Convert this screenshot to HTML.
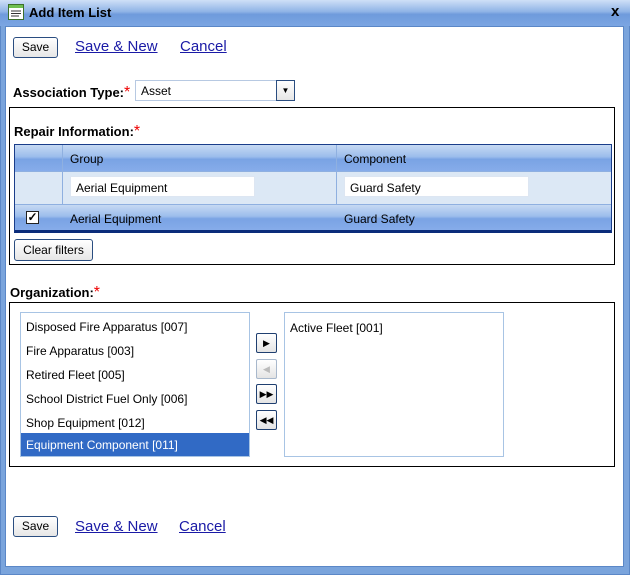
<!DOCTYPE html>
<html><head><style>
*{margin:0;padding:0;box-sizing:border-box}
body{width:630px;height:575px;overflow:hidden;font-family:"Liberation Sans",sans-serif;font-size:12px;color:#000;background:#fff;position:relative}
.a{position:absolute}
.frame{left:0;top:0;width:630px;height:575px;background:#7aa4dc;border:1px solid #5b87c7}
.title{left:0;top:0;width:630px;height:26px;background:linear-gradient(#cfe0f7,#8fb3e6 45%,#6f9bdc 55%,#7ba5e2)}
.content{left:5px;top:26px;width:619px;height:541px;background:#fff;border:1px solid #5b87c7}
.btn{border:1px solid #2a4d80;border-radius:3px;background:linear-gradient(#fff,#e6e6e6);font-size:12px;text-align:center;line-height:18px}
.lnk{color:#1a1aa6;text-decoration:underline;font-size:15px}
.lbl{font-weight:bold;font-size:13px}
.star{color:#e00;font-size:16px;font-weight:normal}
.box{border:1px solid #000}
.hdr{background:linear-gradient(#c6d9f3,#9cbdec 45%,#7aa3e4 55%,#86acea)}
.inp{background:#fff;border:1px solid #dde6f2;font-size:12px;padding:4px 5px}
.li{left:0;width:100%;height:24px;line-height:24px;padding-left:5px;font-size:12px}
.ab{width:21px;height:20px;border:1px solid #1f3f70;border-radius:2px;background:linear-gradient(#fff,#e4e4e4);font-size:9px;text-align:center;line-height:18px}
</style></head><body>
<div class="a frame"></div>
<div class="a title"></div>
<svg class="a" style="left:8px;top:4px" width="16" height="16"><rect x="0.5" y="0.5" width="15" height="15" fill="#fff" stroke="#3c6f2c"/><rect x="1" y="1" width="14" height="3" fill="#6fbf50"/><path d="M3 7h10M3 9.5h10M3 12h8" stroke="#333"/></svg>
<div class="a" style="left:29px;top:5px;font-weight:bold;font-size:13px">Add Item List</div>
<div class="a" style="left:611px;top:3px;font-weight:bold;font-size:15px">x</div>
<div class="a content"></div>

<div class="a btn" style="left:13px;top:37px;width:45px;height:21px">Save</div>
<div class="a lnk" style="left:75px;top:38px">Save &amp; New</div>
<div class="a lnk" style="left:180px;top:38px">Cancel</div>

<div class="a lbl" style="left:13px;top:84px">Association Type:<span class="star">*</span></div>
<div class="a" style="left:135px;top:80px;width:160px;height:21px;border:1px solid #b7c9e2;padding:3px 5px">Asset</div>
<div class="a" style="left:276px;top:80px;width:19px;height:21px;border:1px solid #2a4d80;background:linear-gradient(#fff,#e6e6e6);font-size:8px;text-align:center;line-height:19px">▼</div>

<div class="a box" style="left:9px;top:107px;width:606px;height:158px"></div>
<div class="a lbl" style="left:14px;top:123px">Repair Information:<span class="star">*</span></div>
<div class="a" style="left:14px;top:144px;width:598px;height:89px;border:1px solid #1a3d8a;border-bottom:3px solid #0b2c7a;background:#dce8f5"></div>
<div class="a hdr" style="left:15px;top:145px;width:596px;height:26px"></div>
<div class="a" style="left:62px;top:145px;width:1px;height:59px;background:#8fb0e0"></div>
<div class="a" style="left:336px;top:145px;width:1px;height:59px;background:#8fb0e0"></div>
<div class="a" style="left:70px;top:152px">Group</div>
<div class="a" style="left:344px;top:152px">Component</div>
<div class="a" style="left:15px;top:171px;width:596px;height:1px;background:#8fb0e0"></div>
<div class="a inp" style="left:70px;top:176px;width:185px;height:21px">Aerial Equipment</div>
<div class="a inp" style="left:344px;top:176px;width:185px;height:21px">Guard Safety</div>
<div class="a hdr" style="left:15px;top:204px;width:596px;height:26px;border-top:1px solid #8fb0e0"></div>
<div class="a" style="left:26px;top:211px;width:13px;height:13px;border:1px solid #222;background:#fff;font-size:12px;line-height:11px;text-align:center;font-weight:bold">✓</div>
<div class="a" style="left:70px;top:212px">Aerial Equipment</div>
<div class="a" style="left:344px;top:212px">Guard Safety</div>
<div class="a btn" style="left:14px;top:239px;width:79px;height:22px;line-height:20px">Clear filters</div>

<div class="a lbl" style="left:10px;top:284px">Organization:<span class="star">*</span></div>
<div class="a box" style="left:9px;top:302px;width:606px;height:165px"></div>
<div class="a" style="left:20px;top:312px;width:230px;height:145px;border:1px solid #a8c4e4;overflow:hidden">
<div class="a li" style="top:2px">Disposed Fire Apparatus [007]</div>
<div class="a li" style="top:26px">Fire Apparatus [003]</div>
<div class="a li" style="top:50px">Retired Fleet [005]</div>
<div class="a li" style="top:74px">School District Fuel Only [006]</div>
<div class="a li" style="top:98px">Shop Equipment [012]</div>
<div class="a li" style="top:120px;background:#316ac5;color:#fff">Equipment Component [011]</div>
</div>
<div class="a ab" style="left:256px;top:333px">▶</div>
<div class="a ab" style="left:256px;top:359px;border-color:#a8b8cc;color:#bbb">◀</div>
<div class="a ab" style="left:256px;top:384px">▶▶</div>
<div class="a ab" style="left:256px;top:410px">◀◀</div>
<div class="a" style="left:284px;top:312px;width:220px;height:145px;border:1px solid #a8c4e4">
<div class="a" style="left:5px;top:8px">Active Fleet [001]</div>
</div>

<div class="a btn" style="left:13px;top:516px;width:45px;height:21px">Save</div>
<div class="a lnk" style="left:75px;top:518px">Save &amp; New</div>
<div class="a lnk" style="left:179px;top:518px">Cancel</div>
</body></html>
